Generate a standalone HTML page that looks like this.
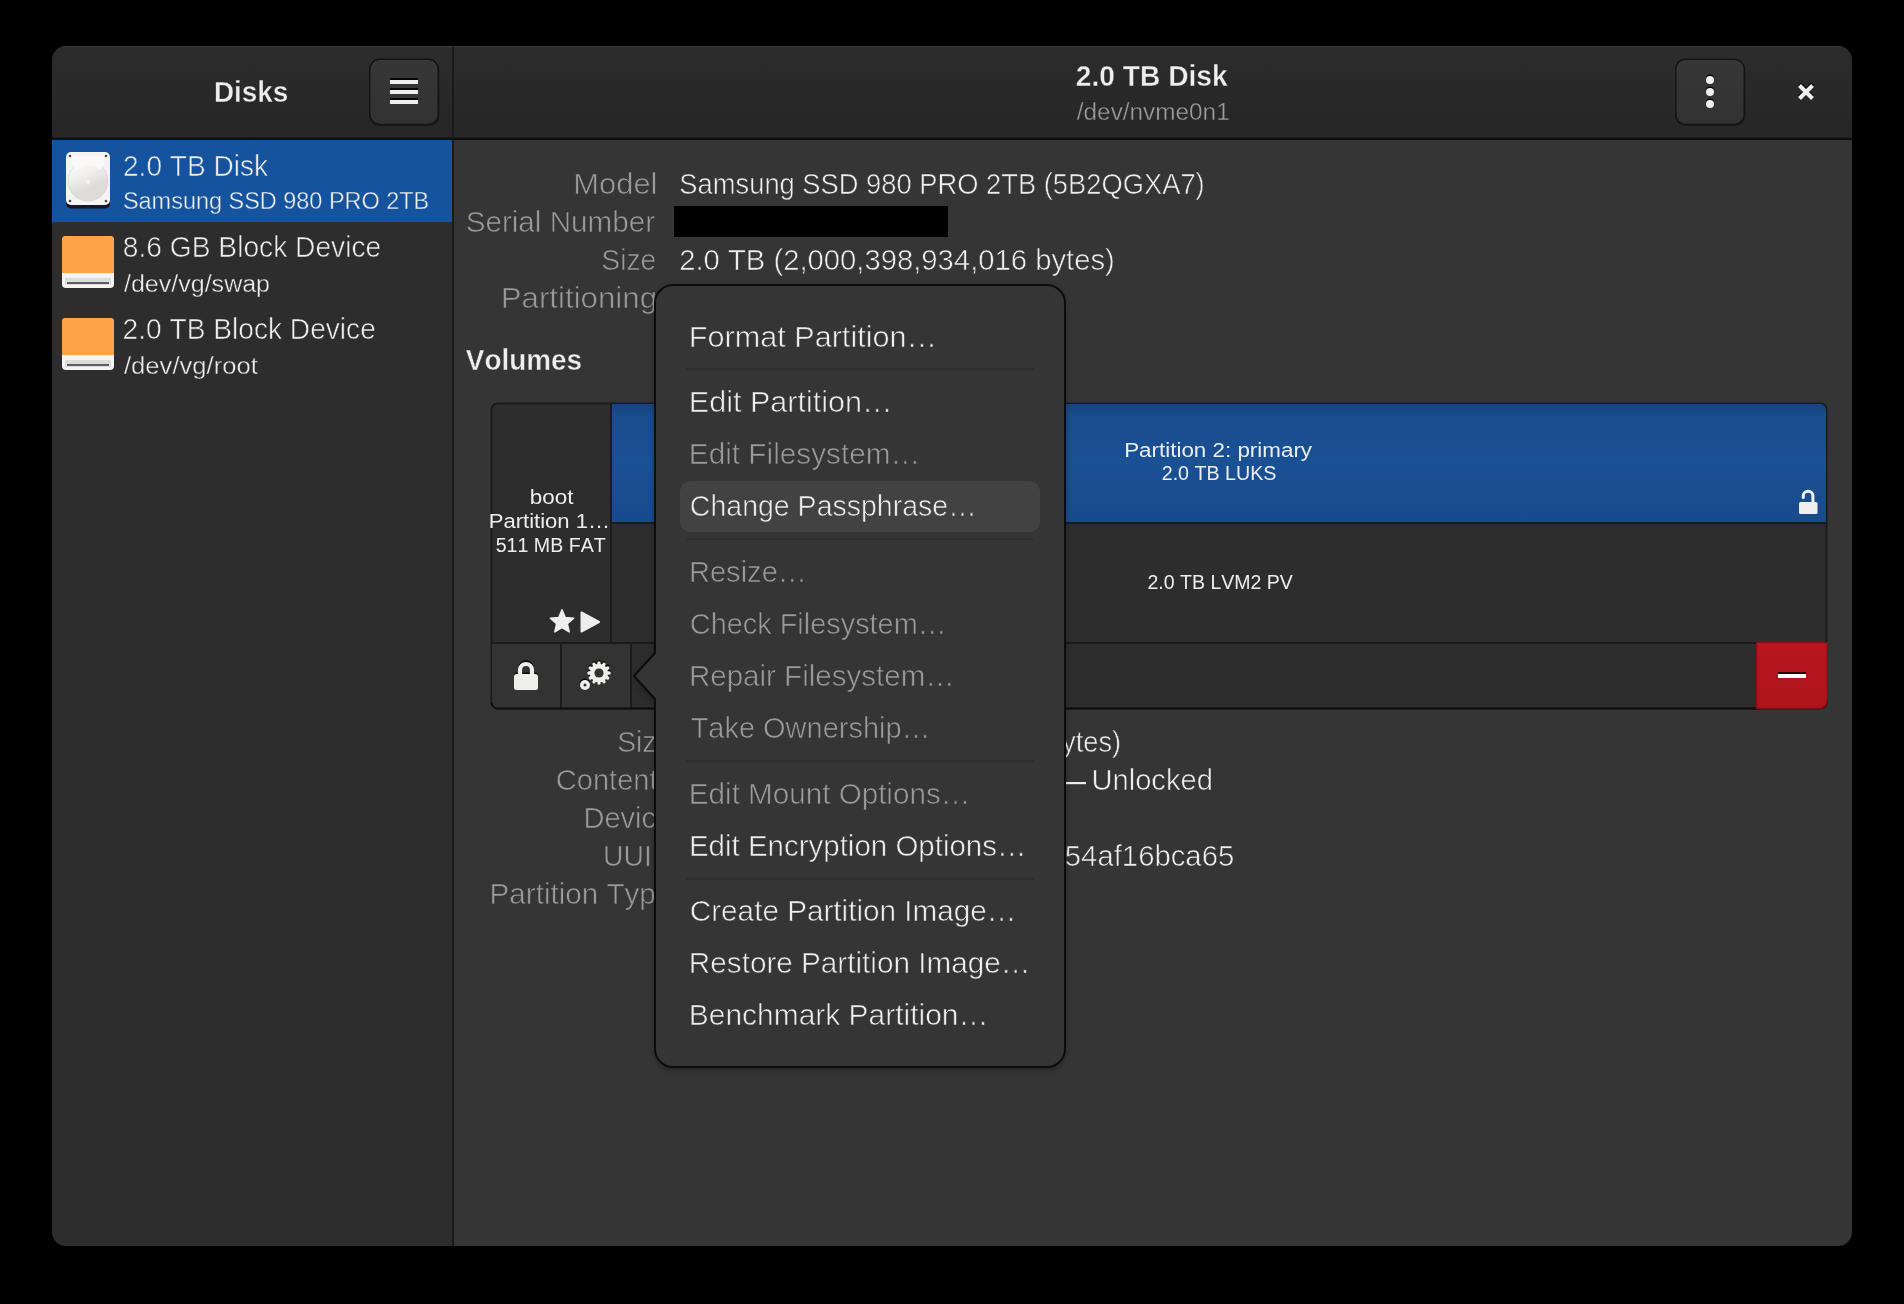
<!DOCTYPE html><html><head><meta charset="utf-8"><style>html,body{margin:0;padding:0;background:#000;width:1904px;height:1304px;overflow:hidden}svg{display:block;will-change:transform}text{font-family:"Liberation Sans",sans-serif;font-kerning:none;font-variant-ligatures:none;white-space:pre}</style></head><body>
<svg width="1904" height="1304" viewBox="0 0 1904 1304">
<defs>
<clipPath id="win"><rect x="52" y="46" width="1800" height="1200" rx="14"/></clipPath>
<linearGradient id="hdr" x1="0" y1="0" x2="0" y2="1"><stop offset="0" stop-color="#2c2c2c"/><stop offset="1" stop-color="#262626"/></linearGradient>
<linearGradient id="btn" x1="0" y1="0" x2="0" y2="1"><stop offset="0" stop-color="#373737"/><stop offset="1" stop-color="#323232"/></linearGradient>
<linearGradient id="blue" x1="0" y1="0" x2="0" y2="1"><stop offset="0" stop-color="#16457f"/><stop offset="0.12" stop-color="#194d8e"/><stop offset="0.5" stop-color="#1a5094"/><stop offset="1" stop-color="#184b8c"/></linearGradient>
<linearGradient id="red" x1="0" y1="0" x2="0" y2="1"><stop offset="0" stop-color="#b8161e"/><stop offset="1" stop-color="#ad151c"/></linearGradient>
<filter id="soft" x="-20%" y="-20%" width="140%" height="140%"><feGaussianBlur stdDeviation="0.45"/></filter>
<filter id="blur3" x="-10%" y="-10%" width="120%" height="120%"><feGaussianBlur stdDeviation="3"/></filter>
</defs>
<rect x="0" y="0" width="1904" height="1304" fill="#000" />
<g clip-path="url(#win)">
<rect x="52" y="140" width="401" height="1106" fill="#2d2d2d" />
<rect x="453" y="140" width="1399" height="1106" fill="#353535" />
<rect x="52" y="46" width="1800" height="92" fill="url(#hdr)" />
<rect x="52" y="46" width="1800" height="1" fill="rgba(255,255,255,0.09)" />
<rect x="52" y="137.6" width="1800" height="2.4" fill="#0e0e0e" />
<rect x="452" y="46" width="2" height="1200" fill="#1a1a1a" />
<rect x="52" y="140" width="400" height="82" fill="#15539e" />
</g>
<rect x="369.5" y="60" width="70" height="66" rx="10" fill="#000" opacity="0.3"/>
<rect x="369.75" y="59.25" width="68.5" height="65.25" rx="10" fill="url(#btn)" stroke="#141414" stroke-width="1.5"/>
<rect x="1675.5" y="60" width="70" height="66" rx="10" fill="#000" opacity="0.3"/>
<rect x="1675.75" y="59.25" width="68.5" height="65.25" rx="10" fill="url(#btn)" stroke="#141414" stroke-width="1.5"/>
<rect x="390" y="78" width="28" height="2" fill="#000" opacity="0.85"/>
<rect x="390" y="80" width="28" height="4" fill="#eeeeec" />
<rect x="390" y="88" width="28" height="2" fill="#000" opacity="0.85"/>
<rect x="390" y="90" width="28" height="4" fill="#eeeeec" />
<rect x="390" y="98" width="28" height="2" fill="#000" opacity="0.85"/>
<rect x="390" y="100" width="28" height="4" fill="#eeeeec" />
<circle cx="1710" cy="78.5" r="4" fill="#000" opacity="0.85"/>
<circle cx="1710" cy="80" r="4" fill="#eeeeec"/>
<circle cx="1710" cy="90.5" r="4" fill="#000" opacity="0.85"/>
<circle cx="1710" cy="92" r="4" fill="#eeeeec"/>
<circle cx="1710" cy="102.5" r="4" fill="#000" opacity="0.85"/>
<circle cx="1710" cy="104" r="4" fill="#eeeeec"/>
<path d="M1799.5 85.5 L1812.5 98.5 M1812.5 85.5 L1799.5 98.5" stroke="#000" stroke-width="4" transform="translate(0,-1.5)" opacity="0.85"/>
<path d="M1799.5 85.5 L1812.5 98.5 M1812.5 85.5 L1799.5 98.5" stroke="#eeeeec" stroke-width="4"/>
<text x="213.93" y="102.00" font-size="30" font-weight="bold" fill="#eeeeec" stroke="#292929" stroke-width="0.4" textLength="74.41" lengthAdjust="spacingAndGlyphs">Disks</text>
<text x="1075.82" y="86.00" font-size="30" font-weight="bold" fill="#eeeeec" stroke="#2a2a2a" stroke-width="0.4" textLength="151.85" lengthAdjust="spacingAndGlyphs">2.0 TB Disk</text>
<text x="1076.80" y="120.00" font-size="23.5" fill="#9a9a98" stroke="#272727" stroke-width="0.3" textLength="152.89" lengthAdjust="spacingAndGlyphs">/dev/nvme0n1</text>
<text x="122.99" y="176.00" font-size="29.5" fill="#eeeeec" stroke="#15539e" stroke-width="0.6" textLength="144.97" lengthAdjust="spacingAndGlyphs">2.0 TB Disk</text>
<text x="122.94" y="209.40" font-size="23.3" fill="#eeeeec" stroke="#15539e" stroke-width="0.35" textLength="306.30" lengthAdjust="spacingAndGlyphs">Samsung SSD 980 PRO 2TB</text>
<text x="122.78" y="257.40" font-size="29.5" fill="#eeeeec" stroke="#2d2d2d" stroke-width="0.6" textLength="258.48" lengthAdjust="spacingAndGlyphs">8.6 GB Block Device</text>
<text x="124.00" y="291.50" font-size="23.3" fill="#eeeeec" stroke="#2d2d2d" stroke-width="0.35" textLength="146.05" lengthAdjust="spacingAndGlyphs">/dev/vg/swap</text>
<text x="122.59" y="339.40" font-size="29.5" fill="#eeeeec" stroke="#2d2d2d" stroke-width="0.6" textLength="253.26" lengthAdjust="spacingAndGlyphs">2.0 TB Block Device</text>
<text x="124.00" y="374.00" font-size="23.3" fill="#eeeeec" stroke="#2d2d2d" stroke-width="0.35" textLength="133.79" lengthAdjust="spacingAndGlyphs">/dev/vg/root</text>
<g>
<defs><linearGradient id="plat" x1="0.3" y1="0" x2="0.6" y2="0.65"><stop offset="0" stop-color="#fbfaf8"/><stop offset="0.45" stop-color="#f2f1ef"/><stop offset="1" stop-color="#dddcd9"/></linearGradient></defs>
<rect x="66" y="156" width="44" height="52.5" rx="5" fill="#1a1424"/>
<rect x="66" y="152" width="44" height="53" rx="5" fill="#f5f4f2"/>
<circle cx="88" cy="181" r="20" fill="url(#plat)" stroke="#cfcecb" stroke-width="0.6"/>
<path d="M72 156 H104 Q106 165 100 170 Q88 160 76 170 Q70 165 72 156 Z" fill="#faf9f7"/>
<circle cx="88" cy="182" r="2.2" fill="#f3f2f0"/>
<circle cx="70" cy="156" r="1.3" fill="#4a4a4a"/><circle cx="106" cy="156" r="1.3" fill="#4a4a4a"/>
<circle cx="70" cy="201" r="1.3" fill="#4a4a4a"/><circle cx="106" cy="201" r="1.3" fill="#4a4a4a"/>
</g>
<g>
<rect x="62" y="236" width="52" height="52" rx="4" fill="#f6f5f4"/>
<path d="M62 273 V240 a4 4 0 0 1 4 -4 H110 a4 4 0 0 1 4 4 V273 Z" fill="#ffa348"/>
<rect x="65" y="278" width="46" height="7" fill="#deddda"/>
<rect x="67" y="282" width="42" height="2" fill="#5e5c64"/>
</g>
<g>
<rect x="62" y="318" width="52" height="52" rx="4" fill="#f6f5f4"/>
<path d="M62 355 V322 a4 4 0 0 1 4 -4 H110 a4 4 0 0 1 4 4 V355 Z" fill="#ffa348"/>
<rect x="65" y="360" width="46" height="7" fill="#deddda"/>
<rect x="67" y="364" width="42" height="2" fill="#5e5c64"/>
</g>
<text x="573.26" y="194.00" font-size="29.5" fill="#9a9a98" stroke="#353535" stroke-width="0.6" textLength="84.20" lengthAdjust="spacingAndGlyphs">Model</text>
<text x="465.65" y="232.00" font-size="29.5" fill="#9a9a98" stroke="#353535" stroke-width="0.6" textLength="189.44" lengthAdjust="spacingAndGlyphs">Serial Number</text>
<text x="601.32" y="270.00" font-size="29.5" fill="#9a9a98" stroke="#353535" stroke-width="0.6" textLength="54.94" lengthAdjust="spacingAndGlyphs">Size</text>
<text x="500.74" y="308.00" font-size="29.5" fill="#9a9a98" stroke="#353535" stroke-width="0.6" textLength="156.28" lengthAdjust="spacingAndGlyphs">Partitioning</text>
<text x="679.36" y="194.00" font-size="29.5" fill="#eeeeec" stroke="#353535" stroke-width="0.6" textLength="525.33" lengthAdjust="spacingAndGlyphs">Samsung SSD 980 PRO 2TB (5B2QGXA7)</text>
<text x="679.13" y="270.00" font-size="29.5" fill="#eeeeec" stroke="#353535" stroke-width="0.6" textLength="435.68" lengthAdjust="spacingAndGlyphs">2.0 TB (2,000,398,934,016 bytes)</text>
<rect x="674" y="206" width="274" height="31" fill="#000" />
<text x="465.81" y="369.50" font-size="30" font-weight="bold" fill="#eeeeec" stroke="#353535" stroke-width="0.4" textLength="116.13" lengthAdjust="spacingAndGlyphs">Volumes</text>
<rect x="491.5" y="403.5" width="1335" height="305" rx="6" fill="#2d2d2d" stroke="#1b1b1b" stroke-width="2"/>
<path d="M612 404 H1820 a6 6 0 0 1 6 6 V522 H612 Z" fill="url(#blue)"/>
<rect x="610" y="404" width="2" height="238" fill="#1b1b1b" />
<rect x="612" y="522" width="1214" height="2" fill="#1b1b1b" />
<rect x="492" y="642" width="1334" height="2" fill="#1b1b1b" />
<rect x="492" y="644" width="68" height="64" fill="#333333" />
<rect x="562" y="644" width="68" height="64" fill="#333333" />
<rect x="560" y="644" width="2" height="64" fill="#1b1b1b" />
<rect x="630" y="644" width="2" height="64" fill="#1b1b1b" />
<path d="M491.5 702 a6.5 6.5 0 0 0 6.5 6.5 H1760" fill="none" stroke="#0f0f0f" stroke-width="2"/>
<path d="M1756.75 642.75 H1827.25 V700 a8.5 8.5 0 0 1 -8.5 8.5 H1756.75 Z" fill="url(#red)" stroke="#8c0f15" stroke-width="1.5"/>
<rect x="1758" y="644" width="68" height="1.2" fill="#c21c24" />
<rect x="1778" y="672" width="28" height="2" fill="#2a0000" />
<rect x="1778" y="674" width="28" height="4" fill="#ffffff" />
<text x="529.76" y="504.00" font-size="19.5" fill="#eeeeec" textLength="43.61" lengthAdjust="spacingAndGlyphs">boot</text>
<text x="488.79" y="528.00" font-size="19.5" fill="#eeeeec" textLength="121.20" lengthAdjust="spacingAndGlyphs">Partition 1…</text>
<text x="495.72" y="551.50" font-size="19.5" fill="#eeeeec" textLength="110.03" lengthAdjust="spacingAndGlyphs">511 MB FAT</text>
<text x="1124.16" y="456.80" font-size="19.5" fill="#eeeeec" textLength="187.88" lengthAdjust="spacingAndGlyphs">Partition 2: primary</text>
<text x="1161.71" y="480.40" font-size="19.5" fill="#eeeeec" textLength="114.79" lengthAdjust="spacingAndGlyphs">2.0 TB LUKS</text>
<text x="1147.52" y="589.00" font-size="19.5" fill="#eeeeec" textLength="145.37" lengthAdjust="spacingAndGlyphs">2.0 TB LVM2 PV</text>
<polygon points="562.00,609.70 565.29,617.47 573.70,618.20 567.33,623.73 569.23,631.95 562.00,627.60 554.77,631.95 556.67,623.73 550.30,618.20 558.71,617.47" fill="#eeeeec" stroke="#eeeeec" stroke-width="1.5" stroke-linejoin="round" filter="url(#soft)"/>
<path d="M581.5 612.5 L599 622 L581.5 631.5 Z" fill="#eeeeec" stroke="#eeeeec" stroke-width="2" stroke-linejoin="round" filter="url(#soft)"/>
<rect x="1799" y="502" width="18.5" height="12" rx="1.5" fill="#eeeeec"/>
<path d="M1803.3 497.5 V496 a4.8 4.8 0 0 1 9.6 0 V503" fill="none" stroke="#eeeeec" stroke-width="3" stroke-linecap="round"/>
<g transform="translate(0,-1.6)" opacity="0.85"><path d="M520 676 V670 a6 6 0 0 1 12 0 V676" fill="none" stroke="#000" stroke-width="4.2"/><rect x="514" y="674" width="24" height="16" rx="2.5" fill="#000"/></g>
<path d="M520 676 V670 a6 6 0 0 1 12 0 V676" fill="none" stroke="#eeeeec" stroke-width="4.2"/>
<rect x="514" y="674" width="24" height="16" rx="2.5" fill="#eeeeec"/>
<g opacity="0.85"><circle cx="599" cy="671.4" r="9.2" fill="#000"/><line x1="599.00" y1="663.40" x2="599.00" y2="661.30" stroke="#000" stroke-width="3.3" stroke-linecap="round"/><line x1="603.00" y1="664.47" x2="604.05" y2="662.65" stroke="#000" stroke-width="3.3" stroke-linecap="round"/><line x1="605.93" y1="667.40" x2="607.75" y2="666.35" stroke="#000" stroke-width="3.3" stroke-linecap="round"/><line x1="607.00" y1="671.40" x2="609.10" y2="671.40" stroke="#000" stroke-width="3.3" stroke-linecap="round"/><line x1="605.93" y1="675.40" x2="607.75" y2="676.45" stroke="#000" stroke-width="3.3" stroke-linecap="round"/><line x1="603.00" y1="678.33" x2="604.05" y2="680.15" stroke="#000" stroke-width="3.3" stroke-linecap="round"/><line x1="599.00" y1="679.40" x2="599.00" y2="681.50" stroke="#000" stroke-width="3.3" stroke-linecap="round"/><line x1="595.00" y1="678.33" x2="593.95" y2="680.15" stroke="#000" stroke-width="3.3" stroke-linecap="round"/><line x1="592.07" y1="675.40" x2="590.25" y2="676.45" stroke="#000" stroke-width="3.3" stroke-linecap="round"/><line x1="591.00" y1="671.40" x2="588.90" y2="671.40" stroke="#000" stroke-width="3.3" stroke-linecap="round"/><line x1="592.07" y1="667.40" x2="590.25" y2="666.35" stroke="#000" stroke-width="3.3" stroke-linecap="round"/><line x1="595.00" y1="664.47" x2="593.95" y2="662.65" stroke="#000" stroke-width="3.3" stroke-linecap="round"/><circle cx="585" cy="683.4" r="5" fill="#000"/></g>
<circle cx="599" cy="673" r="9.2" fill="#eeeeec"/><line x1="599.00" y1="665.00" x2="599.00" y2="662.90" stroke="#eeeeec" stroke-width="3.3" stroke-linecap="round"/><line x1="603.00" y1="666.07" x2="604.05" y2="664.25" stroke="#eeeeec" stroke-width="3.3" stroke-linecap="round"/><line x1="605.93" y1="669.00" x2="607.75" y2="667.95" stroke="#eeeeec" stroke-width="3.3" stroke-linecap="round"/><line x1="607.00" y1="673.00" x2="609.10" y2="673.00" stroke="#eeeeec" stroke-width="3.3" stroke-linecap="round"/><line x1="605.93" y1="677.00" x2="607.75" y2="678.05" stroke="#eeeeec" stroke-width="3.3" stroke-linecap="round"/><line x1="603.00" y1="679.93" x2="604.05" y2="681.75" stroke="#eeeeec" stroke-width="3.3" stroke-linecap="round"/><line x1="599.00" y1="681.00" x2="599.00" y2="683.10" stroke="#eeeeec" stroke-width="3.3" stroke-linecap="round"/><line x1="595.00" y1="679.93" x2="593.95" y2="681.75" stroke="#eeeeec" stroke-width="3.3" stroke-linecap="round"/><line x1="592.07" y1="677.00" x2="590.25" y2="678.05" stroke="#eeeeec" stroke-width="3.3" stroke-linecap="round"/><line x1="591.00" y1="673.00" x2="588.90" y2="673.00" stroke="#eeeeec" stroke-width="3.3" stroke-linecap="round"/><line x1="592.07" y1="669.00" x2="590.25" y2="667.95" stroke="#eeeeec" stroke-width="3.3" stroke-linecap="round"/><line x1="595.00" y1="666.07" x2="593.95" y2="664.25" stroke="#eeeeec" stroke-width="3.3" stroke-linecap="round"/><circle cx="585" cy="685" r="5" fill="#eeeeec"/>
<circle cx="599" cy="673" r="4.6" fill="#333333"/>
<circle cx="585" cy="685" r="1.5" fill="#333333"/>
<text x="617.22" y="752.00" font-size="29.5" fill="#9a9a98" stroke="#353535" stroke-width="0.6" textLength="55.04" lengthAdjust="spacingAndGlyphs">Size</text>
<text x="555.83" y="790.00" font-size="29.5" fill="#9a9a98" stroke="#353535" stroke-width="0.6" textLength="116.22" lengthAdjust="spacingAndGlyphs">Contents</text>
<text x="583.41" y="828.00" font-size="29.5" fill="#9a9a98" stroke="#353535" stroke-width="0.6" textLength="88.88" lengthAdjust="spacingAndGlyphs">Device</text>
<text x="603.11" y="866.00" font-size="29.5" fill="#9a9a98" stroke="#353535" stroke-width="0.6" textLength="69.24" lengthAdjust="spacingAndGlyphs">UUID</text>
<text x="489.57" y="904.00" font-size="29.5" fill="#9a9a98" stroke="#353535" stroke-width="0.6" textLength="182.75" lengthAdjust="spacingAndGlyphs">Partition Type</text>
<text x="714.19" y="752.00" font-size="29.5" fill="#eeeeec" stroke="#353535" stroke-width="0.6" textLength="407.01" lengthAdjust="spacingAndGlyphs">2.0 TB (2,000,397,885,440 bytes)</text>
<text x="1091.45" y="790.00" font-size="29.5" fill="#eeeeec" stroke="#353535" stroke-width="0.6" textLength="121.42" lengthAdjust="spacingAndGlyphs">Unlocked</text>
<rect x="1060" y="782" width="26" height="2.2" fill="#eeeeec" />
<text x="1064.83" y="866.00" font-size="29.5" fill="#eeeeec" stroke="#353535" stroke-width="0.6" textLength="169.40" lengthAdjust="spacingAndGlyphs">54af16bca65</text>
<path d="M673 285 H1047 a18 18 0 0 1 18 18 V1049 a18 18 0 0 1 -18 18 H673 a18 18 0 0 1 -18 -18 V699 L634 676 L655 653 V303 a18 18 0 0 1 18 -18 Z" fill="#000" opacity="0.35" transform="translate(0,2.5)" filter="url(#blur3)"/>
<path d="M673 285 H1047 a18 18 0 0 1 18 18 V1049 a18 18 0 0 1 -18 18 H673 a18 18 0 0 1 -18 -18 V699 L634 676 L655 653 V303 a18 18 0 0 1 18 -18 Z" fill="#353535" stroke="#0c0c0c" stroke-width="2"/>
<rect x="686" y="368" width="348" height="2" fill="#2f2f2f" />
<rect x="686" y="538" width="348" height="2" fill="#2f2f2f" />
<rect x="686" y="760" width="348" height="2" fill="#2f2f2f" />
<rect x="686" y="878" width="348" height="2" fill="#2f2f2f" />
<rect x="680" y="481" width="360" height="51" fill="#424242" rx="10" />
<text x="688.79" y="346.60" font-size="29.5" fill="#eeeeec" stroke="#353535" stroke-width="0.6" textLength="248.37" lengthAdjust="spacingAndGlyphs">Format Partition…</text>
<text x="688.79" y="412.20" font-size="29.5" fill="#eeeeec" stroke="#353535" stroke-width="0.6" textLength="203.75" lengthAdjust="spacingAndGlyphs">Edit Partition…</text>
<text x="688.86" y="464.20" font-size="29.5" fill="#9a9a98" stroke="#353535" stroke-width="0.6" textLength="231.38" lengthAdjust="spacingAndGlyphs">Edit Filesystem…</text>
<text x="689.85" y="515.70" font-size="29.5" fill="#eeeeec" stroke="#424242" stroke-width="0.6" textLength="286.82" lengthAdjust="spacingAndGlyphs">Change Passphrase…</text>
<text x="688.91" y="582.00" font-size="29.5" fill="#9a9a98" stroke="#353535" stroke-width="0.6" textLength="118.04" lengthAdjust="spacingAndGlyphs">Resize…</text>
<text x="689.83" y="634.00" font-size="29.5" fill="#9a9a98" stroke="#353535" stroke-width="0.6" textLength="256.79" lengthAdjust="spacingAndGlyphs">Check Filesystem…</text>
<text x="688.88" y="686.00" font-size="29.5" fill="#9a9a98" stroke="#353535" stroke-width="0.6" textLength="265.93" lengthAdjust="spacingAndGlyphs">Repair Filesystem…</text>
<text x="690.65" y="738.00" font-size="29.5" fill="#9a9a98" stroke="#353535" stroke-width="0.6" textLength="239.88" lengthAdjust="spacingAndGlyphs">Take Ownership…</text>
<text x="688.87" y="803.50" font-size="29.5" fill="#9a9a98" stroke="#353535" stroke-width="0.6" textLength="281.45" lengthAdjust="spacingAndGlyphs">Edit Mount Options…</text>
<text x="688.88" y="856.00" font-size="29.5" fill="#eeeeec" stroke="#353535" stroke-width="0.6" textLength="337.62" lengthAdjust="spacingAndGlyphs">Edit Encryption Options…</text>
<text x="689.79" y="921.30" font-size="29.5" fill="#eeeeec" stroke="#353535" stroke-width="0.6" textLength="326.74" lengthAdjust="spacingAndGlyphs">Create Partition Image…</text>
<text x="688.86" y="973.30" font-size="29.5" fill="#eeeeec" stroke="#353535" stroke-width="0.6" textLength="341.57" lengthAdjust="spacingAndGlyphs">Restore Partition Image…</text>
<text x="688.84" y="1025.30" font-size="29.5" fill="#eeeeec" stroke="#353535" stroke-width="0.6" textLength="299.62" lengthAdjust="spacingAndGlyphs">Benchmark Partition…</text>
</svg></body></html>
